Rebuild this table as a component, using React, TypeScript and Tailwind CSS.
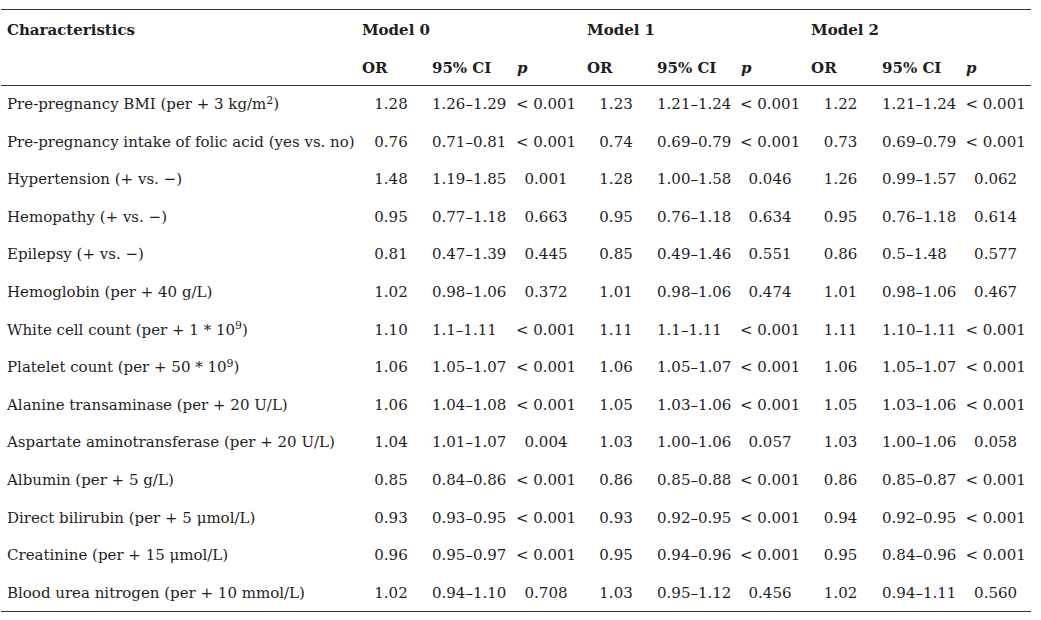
import React from "react";

type Model = [string, string, string];

interface Row {
  label: React.ReactNode;
  models: [Model, Model, Model];
}

const rows: Row[] = [
  {
    label: (
      <>
        Pre-pregnancy BMI (per + 3 kg/m<sup className="text-[11px]">2</sup>)
      </>
    ),
    models: [
      ["1.28", "1.26–1.29", "< 0.001"],
      ["1.23", "1.21–1.24", "< 0.001"],
      ["1.22", "1.21–1.24", "< 0.001"],
    ],
  },
  {
    label: "Pre-pregnancy intake of folic acid (yes vs. no)",
    models: [
      ["0.76", "0.71–0.81", "< 0.001"],
      ["0.74", "0.69–0.79", "< 0.001"],
      ["0.73", "0.69–0.79", "< 0.001"],
    ],
  },
  {
    label: "Hypertension (+ vs. −)",
    models: [
      ["1.48", "1.19–1.85", "0.001"],
      ["1.28", "1.00–1.58", "0.046"],
      ["1.26", "0.99–1.57", "0.062"],
    ],
  },
  {
    label: "Hemopathy (+ vs. −)",
    models: [
      ["0.95", "0.77–1.18", "0.663"],
      ["0.95", "0.76–1.18", "0.634"],
      ["0.95", "0.76–1.18", "0.614"],
    ],
  },
  {
    label: "Epilepsy (+ vs. −)",
    models: [
      ["0.81", "0.47–1.39", "0.445"],
      ["0.85", "0.49–1.46", "0.551"],
      ["0.86", "0.5–1.48", "0.577"],
    ],
  },
  {
    label: "Hemoglobin (per + 40 g/L)",
    models: [
      ["1.02", "0.98–1.06", "0.372"],
      ["1.01", "0.98–1.06", "0.474"],
      ["1.01", "0.98–1.06", "0.467"],
    ],
  },
  {
    label: (
      <>
        White cell count (per + 1 * 10<sup className="text-[11px]">9</sup>)
      </>
    ),
    models: [
      ["1.10", "1.1–1.11", "< 0.001"],
      ["1.11", "1.1–1.11", "< 0.001"],
      ["1.11", "1.10–1.11", "< 0.001"],
    ],
  },
  {
    label: (
      <>
        Platelet count (per + 50 * 10<sup className="text-[11px]">9</sup>)
      </>
    ),
    models: [
      ["1.06", "1.05–1.07", "< 0.001"],
      ["1.06", "1.05–1.07", "< 0.001"],
      ["1.06", "1.05–1.07", "< 0.001"],
    ],
  },
  {
    label: "Alanine transaminase (per + 20 U/L)",
    models: [
      ["1.06", "1.04–1.08", "< 0.001"],
      ["1.05", "1.03–1.06", "< 0.001"],
      ["1.05", "1.03–1.06", "< 0.001"],
    ],
  },
  {
    label: "Aspartate aminotransferase (per + 20 U/L)",
    models: [
      ["1.04", "1.01–1.07", "0.004"],
      ["1.03", "1.00–1.06", "0.057"],
      ["1.03", "1.00–1.06", "0.058"],
    ],
  },
  {
    label: "Albumin (per + 5 g/L)",
    models: [
      ["0.85", "0.84–0.86", "< 0.001"],
      ["0.86", "0.85–0.88", "< 0.001"],
      ["0.86", "0.85–0.87", "< 0.001"],
    ],
  },
  {
    label: "Direct bilirubin (per + 5 μmol/L)",
    models: [
      ["0.93", "0.93–0.95", "< 0.001"],
      ["0.93", "0.92–0.95", "< 0.001"],
      ["0.94", "0.92–0.95", "< 0.001"],
    ],
  },
  {
    label: "Creatinine (per + 15 μmol/L)",
    models: [
      ["0.96", "0.95–0.97", "< 0.001"],
      ["0.95", "0.94–0.96", "< 0.001"],
      ["0.95", "0.84–0.96", "< 0.001"],
    ],
  },
  {
    label: "Blood urea nitrogen (per + 10 mmol/L)",
    models: [
      ["1.02", "0.94–1.10", "0.708"],
      ["1.03", "0.95–1.12", "0.456"],
      ["1.02", "0.94–1.11", "0.560"],
    ],
  },
];

const cell = "px-[6px] whitespace-nowrap";

const App = () => {
  return (
    <div className="w-[1041px] h-[620px] bg-white pt-[9px] pl-[1px]">
      <table
        className="table-fixed border-collapse w-[1030px] text-[#1e1e1e] text-[15px]"
        style={{ fontFamily: '"DejaVu Serif", serif' }}
      >
        <colgroup>
          <col className="w-[355px]" />
          <col className="w-[70px]" />
          <col className="w-[85px]" />
          <col className="w-[70px]" />
          <col className="w-[70px]" />
          <col className="w-[84px]" />
          <col className="w-[70px]" />
          <col className="w-[71px]" />
          <col className="w-[84px]" />
          <col className="w-[71px]" />
        </colgroup>
        <thead className="font-bold">
          <tr className="h-[38px] border-t border-[#333]">
            <th className={`${cell} pt-[3px] text-left`}>Characteristics</th>
            <th className={`${cell} pt-[3px] text-left`} colSpan={3}>Model 0</th>
            <th className={`${cell} pt-[3px] text-left`} colSpan={3}>Model 1</th>
            <th className={`${cell} pt-[3px] text-left`} colSpan={3}>Model 2</th>
          </tr>
          <tr className="h-[38px] border-b border-[#333]">
            <th className={cell}></th>
            {[0, 1, 2].map((m) => (
              <React.Fragment key={m}>
                <th className={`${cell} pt-[3px] text-left`}>OR</th>
                <th className={`${cell} pt-[3px] text-left`}>95% CI</th>
                <th className={`${cell} pt-[3px] text-left italic`}>p</th>
              </React.Fragment>
            ))}
          </tr>
        </thead>
        <tbody className="border-b border-[#333]">
          {rows.map((row, i) => (
            <tr key={i} className="h-[37.6px]">
              <td className={`${cell} text-left`}>{row.label}</td>
              {row.models.map((m, j) => (
                <React.Fragment key={j}>
                  <td className={`${cell} text-center`}>{m[0]}</td>
                  <td className={`${cell} text-left`}>{m[1]}</td>
                  <td className="whitespace-nowrap text-center">{m[2]}</td>
                </React.Fragment>
              ))}
            </tr>
          ))}
        </tbody>
      </table>
    </div>
  );
};

export default App;
